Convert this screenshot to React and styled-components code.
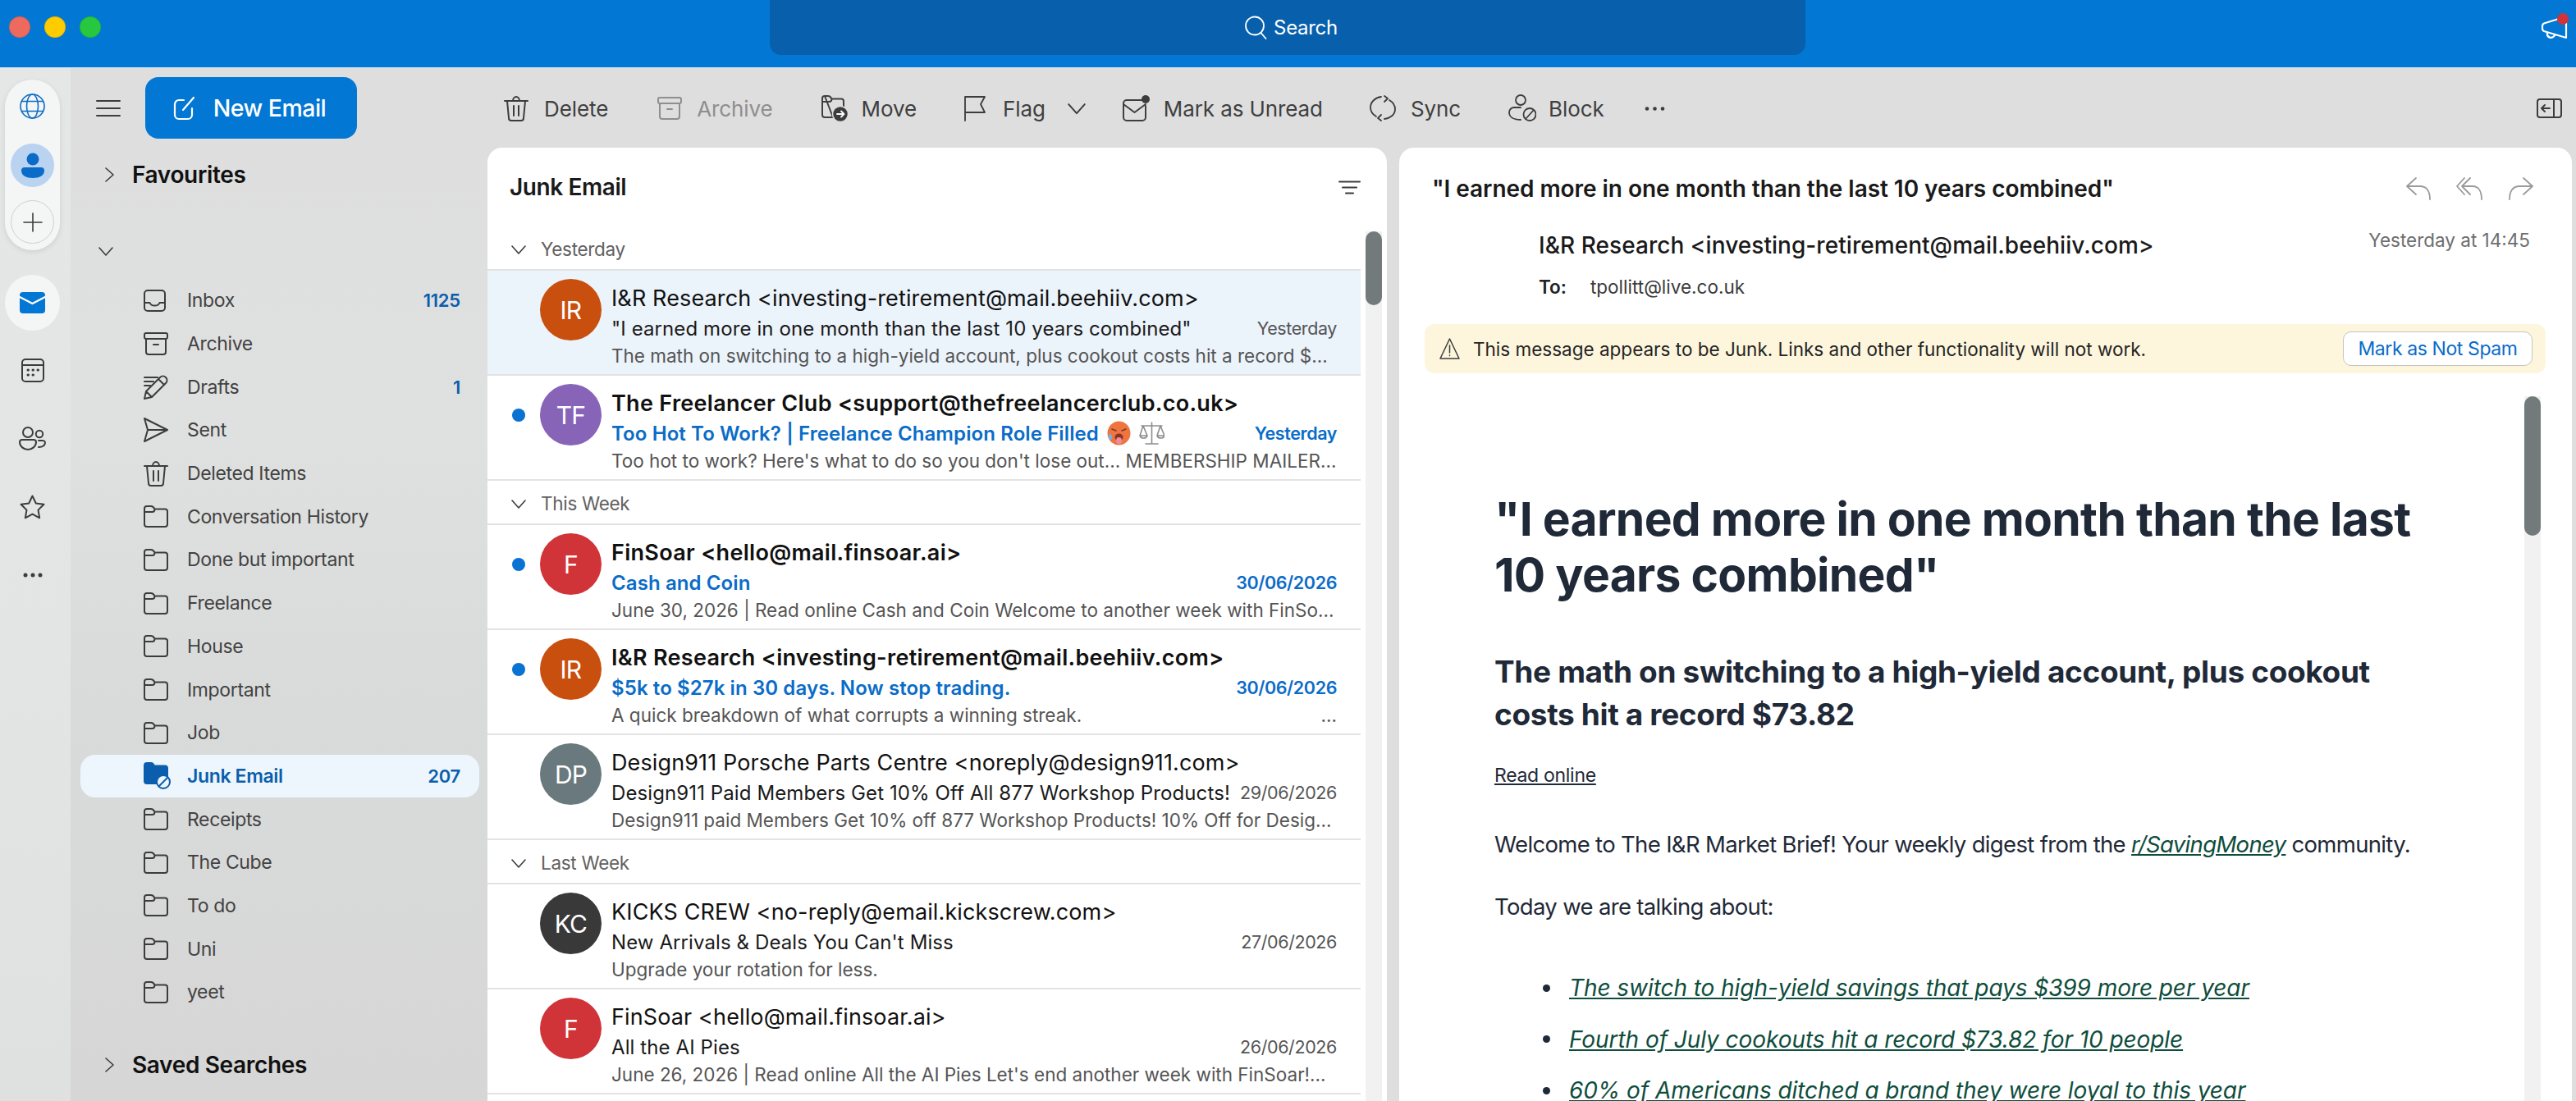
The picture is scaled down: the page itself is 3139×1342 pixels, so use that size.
import React from "react";
import styled, { createGlobalStyle } from "styled-components";

const Global = createGlobalStyle`
  html, body { margin: 0; padding: 0; height: 100%; overflow: hidden; background: #dedede; }
  body { font-family: Inter, "Liberation Sans", sans-serif; -webkit-font-smoothing: antialiased; }
  #root { height: 100%; }
  * { box-sizing: border-box; }
`;

const Page = styled.div`
  width: 3139px; height: 1342px; display: flex; flex-direction: column; overflow: hidden;
`;
const TitleBar = styled.header`
  height: 83px; flex: none; background: #0277d4; border-bottom: 1px solid #cfe4f5;
  display: grid; grid-template-columns: 938px 1262px 1fr; align-items: start;
`;
const Lights = styled.div`
  display: flex; gap: 17px; padding: 20px 0 0 11px;
`;
const Light = styled.span`
  width: 26px; height: 26px; border-radius: 50%; background: ${p => p.$c}; box-shadow: inset 0 0 0 1px rgba(0,0,0,.1);
`;
const SearchBox = styled.div`
  height: 67px; background: #0860ad; border-radius: 0 0 14px 14px; display: flex; align-items: center; justify-content: center;
  gap: 7px; color: #fff; font-size: 24px; letter-spacing: -0.3px; padding-left: 8px;
`;
const TitleRight = styled.div`
  display: flex; justify-content: flex-end; padding: 20px 8px 0 0;
`;
const Notifier = styled.div`
  position: relative; width: 34px; height: 28px;
`;
const RedDot = styled.span`
  position: absolute; top: -4px; right: 1px; width: 14px; height: 14px; border-radius: 50%; background: #d13438;
`;
const Body = styled.div`
  flex: 1; display: flex; min-height: 0;
`;
const Rail = styled.nav`
  width: 86px; flex: none; background: linear-gradient(180deg,#e5e6e6,#e3e5e4 60%,#dfe0e0);
  display: flex; flex-direction: column; align-items: center; padding: 14px 13px 0 6px;
`;
const AccountPill = styled.div`
  width: 67px; height: 208px; border-radius: 34px; background: #f4f5f5; box-shadow: 0 2px 6px rgba(0,0,0,.1);
  display: flex; flex-direction: column; align-items: center; padding-top: 17px; flex: none;
`;
const AvatarBubble = styled.div`
  width: 53px; height: 53px; margin-top: 30px; border-radius: 50%; background: #b9d3f1; display: flex; align-items: center; justify-content: center;
`;
const PlusBubble = styled.div`
  width: 53px; height: 53px; margin-top: 16px; border-radius: 50%; border: 1px solid #cfcfcf; display: flex; align-items: center; justify-content: center;
`;
const MailPill = styled.div`
  width: 67px; height: 68px; margin-top: 30px; border-radius: 34px; background: #f4f5f5; display: flex; align-items: center; justify-content: center; flex: none;
`;
const RailItem = styled.div`
  height: 83px; display: flex; align-items: center; justify-content: center; flex: none; margin-top: ${p => p.$top || 0}px;
`;
const FolderPane = styled.aside`
  width: 508px; flex: none; padding: 11px 10px 0 12px; display: flex; flex-direction: column;
  background: linear-gradient(180deg,#dedede 0%,#dfe0e0 35%,#d9dbda 62%,#d6d6d6 100%);
`;
const ComposeRow = styled.div`
  display: flex; align-items: center; height: 75px; padding-left: 19px; gap: 30px; flex: none;
`;
const NewEmail = styled.button`
  width: 258px; height: 75px; border: 0; border-radius: 16px; background: #0277d4; color: #fff;
  display: flex; align-items: center; justify-content: center; gap: 22px; padding: 0 4px 0 0;
  font: 500 28.5px Inter, sans-serif; letter-spacing: -0.5px;
`;
const SectionHead = styled.div`
  height: 52px; margin-top: ${p => p.$top}px; display: flex; align-items: center; gap: 19px; padding-left: 26px; flex: none;
  font-size: 28px; font-weight: 600; color: #111; letter-spacing: -0.35px;
`;
const CollapseRow = styled.div`
  height: 52px; margin-top: 41px; padding-left: 22px; display: flex; align-items: center; flex: none;
`;
const FolderList = styled.ul`
  list-style: none; margin: 8px 0 0; padding: 0; flex: none;
`;
const FolderRow = styled.li`
  height: 52.7px; display: flex; align-items: center; padding: 0 23px 0 77px; gap: 23px; border-radius: 18px;
  font-size: 23px; letter-spacing: -0.36px; color: ${p => (p.$active ? "#0a5ead" : "#424242")}; font-weight: ${p => (p.$active ? 600 : 400)};
  background: ${p => (p.$active ? "#eef6fd" : "transparent")};
`;
const FolderIcon = styled.span`
  width: 30px; flex: none; display: flex; align-items: center;
`;
const FolderName = styled.span`
  flex: 1;
`;
const Count = styled.span`
  color: #0a5ead; font-weight: 600; font-size: 22px; letter-spacing: -0.2px;
`;
const Main = styled.main`
  flex: 1; min-width: 0; display: flex; flex-direction: column; padding-right: 5px;
`;
const Toolbar = styled.div`
  height: 97px; flex: none; display: flex; align-items: center; padding: 1px 12px 0 20px; gap: 57px; background: #dedede;
`;
const ToolButton = styled.div`
  display: flex; align-items: center; gap: ${p => p.$inner || 18}px; font-size: 26px; letter-spacing: -0.1px;
  color: ${p => (p.$off ? "#8e8e8e" : "#3f3f3f")}; margin-left: ${p => p.$shift || 0}px;
`;
const FlagCaret = styled.span`
  margin-left: 6px; display: flex;
`;
const ToolEnd = styled.div`
  margin-left: auto; display: flex; align-items: center;
`;
const Panels = styled.div`
  flex: 1; min-height: 0; display: flex; gap: 15px;
`;
const ListPanel = styled.section`
  width: 1096px; flex: none; background: #fff; border-radius: 18px 18px 0 0; display: flex; flex-direction: column; overflow: hidden;
`;
const ListHead = styled.div`
  height: 96px; flex: none; display: flex; align-items: center; justify-content: space-between; padding: 0 32px 0 27px;
  font-size: 28px; font-weight: 600; color: #1a1a1a; letter-spacing: -0.42px;
`;
const ListBody = styled.div`
  flex: 1; min-height: 0; display: flex;
`;
const Rows = styled.div`
  width: 1064px; flex: none;
`;
const Track = styled.div`
  width: 20px; margin: ${p => p.$top}px 0 0 ${p => p.$left}px; flex: none; background: #f1f1f1;
`;
const Thumb = styled.div`
  width: 20px; height: ${p => p.$h}px; border-radius: 10px; background: #737a7b;
`;
const GroupHead = styled.div`
  height: 54px; display: flex; align-items: center; gap: 18px; padding: 3px 0 0 29px; border-bottom: 2px solid #e3e3e3;
  font-size: 22.5px; color: #616161; letter-spacing: -0.3px;
`;
const MailRow = styled.article`
  height: 128px; display: flex; padding-top: 10px; border-bottom: 2px solid #e3e3e3; background: ${p => (p.$sel ? "#ebf3fb" : "#fff")};
`;
const DotSlot = styled.div`
  width: 64px; flex: none; padding: 30px 0 0 30px;
`;
const UnreadDot = styled.span`
  display: block; width: 16px; height: 16px; border-radius: 50%; background: #0a72d1;
`;
const Avatar = styled.div`
  width: 75px; height: 75px; flex: none; border-radius: 50%; background: ${p => p.$c}; color: #fff; display: flex; align-items: center; justify-content: center;
  font-size: 30px; letter-spacing: -0.8px;
`;
const MailText = styled.div`
  flex: 1; min-width: 0; padding: 6px 29px 0 12px;
`;
const Sender = styled.div`
  height: 36px; line-height: 36px; font-size: 27px; color: #111; white-space: nowrap; font-weight: ${p => (p.$unread ? 600 : 400)}; letter-spacing: ${p => (p.$unread ? 0.3 : 0.12)}px;
`;
const SubjectLine = styled.div`
  height: 36px; display: flex; align-items: center; justify-content: space-between; gap: 8px; white-space: nowrap;
`;
const Subject = styled.div`
  display: flex; align-items: center; gap: 10px; font-size: 24px; letter-spacing: 0.1px; font-weight: ${p => (p.$unread ? 600 : 400)}; color: ${p => (p.$unread ? "#0a6cc8" : "#1a1a1a")};
`;
const MailDate = styled.div`
  font-size: 21.5px; letter-spacing: -0.4px; font-weight: ${p => (p.$unread ? 600 : 400)}; color: ${p => (p.$unread ? "#0a6cc8" : "#555")};
`;
const Preview = styled.div`
  height: 32px; line-height: 32px; font-size: 22.5px; color: #555; white-space: nowrap; letter-spacing: 0; display: flex; justify-content: space-between;
`;
const Reader = styled.section`
  flex: 1; min-width: 0; background: #fff; border-radius: 18px 18px 0 0; display: flex; flex-direction: column; overflow: hidden;
`;
const ReaderTitle = styled.div`
  height: 100px; flex: none; display: flex; align-items: center; justify-content: space-between; padding: 0 47px 0 40px;
  font-size: 28px; font-weight: 600; color: #1a1a1a; letter-spacing: -0.05px;
`;
const ReplyGroup = styled.div`
  display: flex; gap: 30px;
`;
const FromLine = styled.div`
  display: flex; justify-content: space-between; align-items: flex-start; padding: 0 51px 0 170px; flex: none; height: 42px;
`;
const FromName = styled.div`
  font-size: 28px; font-weight: 500; color: #1a1a1a; letter-spacing: 0.05px; line-height: 38px;
`;
const Sent = styled.div`
  font-size: 22.5px; color: #6e6e6e; letter-spacing: 0; line-height: 26px;
`;
const ToLine = styled.div`
  display: flex; gap: 29px; padding: 12px 0 0 170px; flex: none; height: 73px; font-size: 22.5px; color: #3b3b3b; letter-spacing: 0; line-height: 32px;
`;
const ToLabel = styled.strong`
  font-weight: 600; color: #222;
`;
const Banner = styled.div`
  height: 60px; margin: 0 32px 0 31px; flex: none; border-radius: 12px; background: #fdf6dd; display: flex; align-items: center; padding: 0 16px 0 18px; gap: 16px;
  font-size: 22.5px; color: #242424; letter-spacing: 0;
`;
const BannerText = styled.div`
  flex: 1;
`;
const NotSpam = styled.button`
  width: 231px; height: 42px; background: #fff; border: 1px solid #c4c4c4; border-radius: 10px; color: #0a6cc8; padding: 0;
  font: 400 23px Inter, sans-serif; letter-spacing: -0.4px;
`;
const ReaderBody = styled.div`
  flex: 1; min-height: 0; display: flex;
`;
const Article = styled.div`
  width: 1371px; flex: none; padding: 144px 0 0 116px; color: #1f2937;
`;
const H1 = styled.h1`
  margin: 0; font-size: 57px; line-height: 68px; font-weight: 700; width: 1140px; letter-spacing: -0.72px; color: #1f2937;
`;
const H2 = styled.h2`
  margin: 58px 0 0; font-size: 37px; line-height: 52px; font-weight: 700; width: 1110px; letter-spacing: -0.35px;
`;
const ReadOnline = styled.a`
  display: block; margin-top: 32px; font-size: 23px; line-height: 32px; color: #1f2937; text-decoration: underline; letter-spacing: -0.3px;
`;
const Para = styled.p`
  margin: ${p => p.$top}px 0 0; font-size: 27.5px; line-height: 40px; letter-spacing: -0.67px;
`;
const Link = styled.a`
  color: #0e4d3c; font-style: italic; text-decoration: underline;
`;
const Bullets = styled.ul`
  list-style: none; margin: 59px 0 0; padding: 0 0 0 59px; font-size: 28px; line-height: 40px; letter-spacing: -0.07px;
`;
const Bullet = styled.li`
  display: flex; align-items: center; gap: 23px; margin-bottom: 22.7px; white-space: nowrap;
`;
const BulletDot = styled.span`
  width: 9px; height: 9px; border-radius: 50%; background: #1f2937; flex: none;
`;

const Svg = styled.svg`
  display: block; flex: none; fill: none; stroke: ${p => p.$c || "#3f3f3f"}; stroke-width: ${p => p.$sw || 2}; stroke-linecap: round; stroke-linejoin: round;
`;
const I = ({ w = 30, h = 30, c, sw, vb, children }) => (
  <Svg width={w} height={h} viewBox={vb || `0 0 ${w} ${h}`} $c={c} $sw={sw}>{children}</Svg>
);

const Folder = ({ c }) => (
  <I c={c || "#3c3c3c"} h={27}><path d="M4 1h5c2.500 0 3.500 1.500 4.500 3.500H26a3 3 0 0 1 3 3V23a3 3 0 0 1-3 3H4a3 3 0 0 1-3-3V4a3 3 0 0 1 3-3zM1 8h9.500c2 0 3-1.500 3-3.500" /></I>
);
const Inbox = () => (
  <I h={27} w={28} c="#3c3c3c"><rect x="1" y="1" width="25" height="25" rx="4" /><path d="M1 16h6.500c1 2.600 3.300 3.600 6 3.600s5-1 6-3.600H26" /></I>
);
const ArchiveI = ({ c }) => (
  <I h={28} w={30} c={c || "#3c3c3c"}><rect x="1" y="1" width="28" height="7" rx="2" /><path d="M3 8v16a3 3 0 0 0 3 3h18a3 3 0 0 0 3-3V8M12 15h6" /></I>
);
const Drafts = () => (
  <I h={30} c="#3c3c3c"><path d="M1 29l2-9L20 3c2-2 5-2 7 0s2 5 0 7L10 27zM3 20l7 7M18 5l7 7M1 3h16M1 8h11M1 13h7" /></I>
);
const SentI = () => (
  <I h={30} c="#3c3c3c"><path d="M1 1l28 14L1 29l4-14zM5 15h24" /></I>
);
const Trash = ({ w = 30, h = 31 }) => (
  <I w={w} h={h} vb="0 0 30 31" c="#3c3c3c"><path d="M1 6h28M11 6c0-3 2-5 4-5s4 2 4 5M4 6l2 21c0 2 1 3 3 3h12c2 0 3-1 3-3l2-21M12 12v12M18 12v12" /></I>
);
const JunkFolder = () => (
  <Svg width="33" height="33" viewBox="0 0 33 33">
    <path d="M4 0h5c2.500 0 3.500 1.500 4.500 3.500H26a4 4 0 0 1 4 4V24a3 3 0 0 1-3 3H4a4 4 0 0 1-4-4V4a4 4 0 0 1 4-4z" fill="#0a5ead" stroke="none" />
    <circle cx="24" cy="24" r="8" fill="#eef6fd" stroke="#0a5ead" strokeWidth="2" />
    <path d="M19 29l10-10" stroke="#0a5ead" strokeWidth="2" />
  </Svg>
);
const Chev = ({ dir = "down", s = 18, c = "#3c3c3c" }) => (
  <I w={s} h={s} vb="0 0 18 18" c={c} sw={1.6}>
    {dir === "down" ? <path d="M1 5l8 9 8-9" /> : <path d="M5 1l9 8-9 8" />}
  </I>
);
const Hamburger = () => (
  <I w={30} h={22} c="#3c3c3c"><path d="M1 2h28M1 11h28M1 20h28" /></I>
);

const folders = [
  ["Inbox", <Inbox />, "1125"], ["Archive", <ArchiveI />], ["Drafts", <Drafts />, "1"], ["Sent", <SentI />], ["Deleted Items", <Trash />],
  ["Conversation History"], ["Done but important"], ["Freelance"], ["House"], ["Important"], ["Job"],
  ["Junk Email", <JunkFolder />, "207", true], ["Receipts"], ["The Cube"], ["To do"], ["Uni"], ["yeet"],
];

const Hot = () => (
  <Svg width="29" height="30" viewBox="0 0 29 30">
    <ellipse cx="14.500" cy="15" rx="14" ry="14.500" fill="#ee7440" stroke="none" />
    <path d="M6 10l5 2M23 10l-5 2" stroke="#7a3a20" strokeWidth="1.600" />
    <ellipse cx="14.500" cy="20" rx="5" ry="4.500" fill="#8a3420" stroke="none" />
    <ellipse cx="14.500" cy="24" rx="3.500" ry="4" fill="#f08aa0" stroke="none" />
    <path d="M4 15c-2.500 3-3 7-.5 8s3.500-4 .5-8z" fill="#6cb6ee" stroke="none" />
  </Svg>
);
const Scales = () => (
  <I w={31} h={31} c="#8d8d8d" sw={1.6}>
    <path d="M15.500 2v26M3 6h25M8 28h15M5 6L1 18h9zM26 6l-4 12h9zM1 18c1 4 8 4 9 0M22 18c1 4 8 4 9 0" />
  </I>
);

const mails = [
  { g: "Yesterday" },
  { c: "#c94f0f", a: "IR", s: "I&R Research <investing-retirement@mail.beehiiv.com>", t: "\"I earned more in one month than the last 10 years combined\"", d: "Yesterday", p: "The math on switching to a high-yield account, plus cookout costs hit a record $...", sel: true },
  { c: "#8764b8", a: "TF", s: "The Freelancer Club <support@thefreelancerclub.co.uk>", t: "Too Hot To Work? | Freelance Champion Role Filled", d: "Yesterday", p: "Too hot to work? Here's what to do so you don't lose out... MEMBERSHIP MAILER...", u: true, e: true },
  { g: "This Week" },
  { c: "#d13438", a: "F", s: "FinSoar <hello@mail.finsoar.ai>", t: "Cash and Coin", d: "30/06/2026", p: "June 30, 2026 | Read online Cash and Coin Welcome to another week with FinSo...", u: true },
  { c: "#c94f0f", a: "IR", s: "I&R Research <investing-retirement@mail.beehiiv.com>", t: "$5k to $27k in 30 days. Now stop trading.", d: "30/06/2026", p: "A quick breakdown of what corrupts a winning streak.", tail: "...", u: true },
  { c: "#69797e", a: "DP", s: "Design911 Porsche Parts Centre <noreply@design911.com>", t: "Design911 Paid Members Get 10% Off All 877 Workshop Products!", d: "29/06/2026", p: "Design911 paid Members Get 10% off 877 Workshop Products! 10% Off for Desig..." },
  { g: "Last Week" },
  { c: "#393939", a: "KC", s: "KICKS CREW <no-reply@email.kickscrew.com>", t: "New Arrivals & Deals You Can't Miss", d: "27/06/2026", p: "Upgrade your rotation for less." },
  { c: "#d13438", a: "F", s: "FinSoar <hello@mail.finsoar.ai>", t: "All the AI Pies", d: "26/06/2026", p: "June 26, 2026 | Read online All the AI Pies Let's end another week with FinSoar!..." },
];

export default function App() {
  return (
    <Page>
      <Global />
      <TitleBar>
        <Lights>
          <Light $c="#ee6a5f" /><Light $c="#ffcc00" /><Light $c="#27c840" />
        </Lights>
        <SearchBox>
          <I w={29} h={29} c="#fff" sw={1.8}><circle cx="13" cy="12.500" r="11" /><path d="M20.500 21l6 7" /></I>
          Search
        </SearchBox>
        <TitleRight>
          <Notifier>
            <I w={34} h={28} c="#fff" sw={2.2}><path d="M30 3v23L3 18c-1-.5-2-1-2-3V12c0-2 1-3 2-3.500L24 2M7 20c-1 6 6 8 9 3" /></I>
            <RedDot />
          </Notifier>
        </TitleRight>
      </TitleBar>
      <Body>
        <Rail>
          <AccountPill>
            <I w={31} h={31} c="#0a6cc8" sw={1.6}><circle cx="15.500" cy="15.500" r="14.500" /><ellipse cx="15.500" cy="15.500" rx="7" ry="14.500" /><path d="M2.500 9.500h26M2.500 21.500h26" /></I>
            <AvatarBubble>
              <Svg width="28" height="32" viewBox="0 0 28 32"><circle cx="14" cy="8" r="7.500" fill="#0a6cc8" stroke="none" /><path d="M4 18h20a4 4 0 0 1 4 4c0 6-6 9-14 9S0 28 0 22a4 4 0 0 1 4-4z" fill="#0a6cc8" stroke="none" /></Svg>
            </AvatarBubble>
            <PlusBubble>
              <I w={24} h={24} c="#3c3c3c" sw={1.6}><path d="M12 1v22M1 12h22" /></I>
            </PlusBubble>
          </AccountPill>
          <MailPill>
            <Svg width="31" height="26" viewBox="0 0 31 26"><rect width="31" height="26" rx="4" fill="#0277d4" stroke="none" /><path d="M0 6l15.500 8L31 6" stroke="#fff" strokeWidth="2.400" /></Svg>
          </MailPill>
          <RailItem $top={7}>
            <I w={28} h={29} c="#3c3c3c"><rect x="1" y="1" width="26" height="27" rx="4" /><path d="M1 8h26" /><path d="M8 14h.5M14 14h.5M20 14h.5M8 20h.5M14 20h.5" strokeWidth="3" /></I>
          </RailItem>
          <RailItem>
            <I w={33} h={29} c="#3c3c3c"><circle cx="11" cy="7" r="6" /><circle cx="25" cy="9" r="4.200" /><path d="M4 16h14a3 3 0 0 1 3 3c0 5-5 9-10 9S1 24 1 19a3 3 0 0 1 3-3zM24 17h5a3 3 0 0 1 3 2c0 4-3 6-8 6" /></I>
          </RailItem>
          <RailItem>
            <I w={31} h={30} c="#3c3c3c"><path d="M15.500 1.500l4.300 9 9.700 1.300-7 6.800 1.700 9.700-8.700-4.700-8.700 4.700 1.700-9.700-7-6.800 9.700-1.300z" /></I>
          </RailItem>
          <RailItem>
            <Svg width="24" height="6" viewBox="0 0 24 6"><circle cx="3" cy="3" r="2.500" fill="#3c3c3c" stroke="none" /><circle cx="12" cy="3" r="2.500" fill="#3c3c3c" stroke="none" /><circle cx="21" cy="3" r="2.500" fill="#3c3c3c" stroke="none" /></Svg>
          </RailItem>
        </Rail>
        <FolderPane>
          <ComposeRow>
            <Hamburger />
            <NewEmail>
              <I w={27} h={30} c="#fff" sw={2.2}><path d="M13 5H7a5 5 0 0 0-5 5v13a5 5 0 0 0 5 5h11a5 5 0 0 0 5-5v-8M12 17L25 2" /></I>
              New Email
            </NewEmail>
          </ComposeRow>
          <SectionHead $top={18}><Chev dir="right" />Favourites</SectionHead>
          <CollapseRow><Chev /></CollapseRow>
          <FolderList>
            {folders.map(([name, icon, count, active]) => (
              <FolderRow key={name} $active={active}>
                <FolderIcon>{icon || <Folder />}</FolderIcon>
                <FolderName>{name}</FolderName>
                {count && <Count>{count}</Count>}
              </FolderRow>
            ))}
          </FolderList>
          <SectionHead $top={36}><Chev dir="right" />Saved Searches</SectionHead>
        </FolderPane>
        <Main>
          <Toolbar>
            <ToolButton $inner={19}><Trash />Delete</ToolButton>
            <ToolButton $off $shift={3}><ArchiveI c="#8e8e8e" />Archive</ToolButton>
            <ToolButton $inner={16} $shift={2}>
              <Svg width="33" height="33" viewBox="0 0 33 33"><path d="M4 1h4c2.500 0 3.500 1.500 4.500 3.500H24a3 3 0 0 1 3 3V15M14 27H4a3 3 0 0 1-3-3V4a3 3 0 0 1 3-3zM1 8h8c2 0 3.500-1.500 3.500-3.500" /><circle cx="23" cy="23" r="9.500" fill="#3c3c3c" stroke="#dedede" strokeWidth="1.500" /><path d="M19 23h8M24 19.500l3.500 3.500-3.500 3.500" stroke="#fff" strokeWidth="1.800" /></Svg>
              Move
            </ToolButton>
            <ToolButton $inner={21} $shift={0}>
              <I w={27} h={31} c="#3c3c3c" sw={1.800}><path d="M2 30V1h24l-5 9 5 10H2" /></I>
              Flag
              <FlagCaret><Chev s={22} /></FlagCaret>
            </ToolButton>
            <ToolButton $inner={16} $shift={-12}>
              <Svg width="34" height="32" viewBox="0 0 34 32"><path d="M24 6H5a4 4 0 0 0-4 4v17a4 4 0 0 0 4 4h19a4 4 0 0 0 4-4V13M1 11l13.500 10L28 11" /><circle cx="28" cy="5" r="5" fill="#3c3c3c" stroke="none" /></Svg>
              Mark as Unread
            </ToolButton>
            <ToolButton $inner={18} $shift={0}>
              <I w={32} h={34} c="#3c3c3c" sw={1.800}><path d="M8 27C3 24 1 20 1 16 1 9 7 4 14 3M18 2l4 3-4 4M24 7c5 3 7 7 7 11 0 7-6 11-13 12M14 32l-4-3 4-4" /></I>
              Sync
            </ToolButton>
            <ToolButton $inner={15} $shift={1}>
              <I w={34} h={34} c="#3c3c3c" sw={1.800}><circle cx="15" cy="7" r="6" /><path d="M15 16H7a6 6 0 0 0-6 6c0 6 6 9 14 9M26 17a7.500 7.500 0 1 1 0 15 7.500 7.500 0 0 1 0-15zM21 30l10-11" /></I>
              Block
            </ToolButton>
            <ToolButton $shift={-8}>
              <Svg width="25" height="5" viewBox="0 0 25 5"><circle cx="3" cy="2.500" r="2.300" fill="#3c3c3c" stroke="none" /><circle cx="12.500" cy="2.500" r="2.300" fill="#3c3c3c" stroke="none" /><circle cx="22" cy="2.500" r="2.300" fill="#3c3c3c" stroke="none" /></Svg>
            </ToolButton>
            <ToolEnd>
              <I w={31} h={24} c="#3c3c3c" sw={2}><rect x="1" y="1" width="29" height="22" rx="3" /><path d="M21 1v22M16 12H6M10 8l-4 4 4 4" /></I>
            </ToolEnd>
          </Toolbar>
          <Panels>
            <ListPanel>
              <ListHead>
                Junk Email
                <I w={27} h={17} c="#3c3c3c" sw={2}><path d="M1 1.500h25M5 8.500h17M9 15.500h9" /></I>
              </ListHead>
              <ListBody>
                <Rows>
                  {mails.map((m, i) => m.g ? (
                    <GroupHead key={i}><Chev />{m.g}</GroupHead>
                  ) : (
                    <MailRow key={i} $sel={m.sel}>
                      <DotSlot>{m.u && <UnreadDot />}</DotSlot>
                      <Avatar $c={m.c}>{m.a}</Avatar>
                      <MailText>
                        <Sender $unread={m.u}>{m.s}</Sender>
                        <SubjectLine>
                          <Subject $unread={m.u}>{m.t}{m.e && <><Hot /><Scales /></>}</Subject>
                          <MailDate $unread={m.u}>{m.d}</MailDate>
                        </SubjectLine>
                        <Preview><span>{m.p}</span>{m.tail && <span>{m.tail}</span>}</Preview>
                      </MailText>
                    </MailRow>
                  ))}
                </Rows>
                <Track $top={6} $left={6}><Thumb $h={90} /></Track>
              </ListBody>
            </ListPanel>
            <Reader>
              <ReaderTitle>
                {"\"I earned more in one month than the last 10 years combined\""}
                <ReplyGroup>
                  <I w={31} h={28} c="#9a9a9a" sw={1.800}><path d="M12 1L1 11l11 10M1 11h16c8 0 12 6 12 16" /></I>
                  <I w={33} h={28} c="#9a9a9a" sw={1.800}><path d="M10 1L1 11l9 10M17 1L7 11l10 10M7 11h13c7 0 11 6 11 16" /></I>
                  <I w={31} h={28} c="#9a9a9a" sw={1.800}><path d="M19 1l11 10-11 10M30 11H14C6 11 2 17 2 27" /></I>
                </ReplyGroup>
              </ReaderTitle>
              <FromLine>
                <FromName>{"I&R Research <investing-retirement@mail.beehiiv.com>"}</FromName>
                <Sent>Yesterday at 14:45</Sent>
              </FromLine>
              <ToLine><ToLabel>To:</ToLabel>tpollitt@live.co.uk</ToLine>
              <Banner>
                <I w={25} h={26} c="#3c3c3c" sw={1.500}><path d="M12.500 1L1 25h23zM12.500 9v9M12.500 21v.5" /></I>
                <BannerText>This message appears to be Junk. Links and other functionality will not work.</BannerText>
                <NotSpam>Mark as Not Spam</NotSpam>
              </Banner>
              <ReaderBody>
                <Article>
                  <H1>{"\"I earned more in one month than the last 10 years combined\""}</H1>
                  <H2>The math on switching to a high-yield account, plus cookout costs hit a record $73.82</H2>
                  <ReadOnline>Read online</ReadOnline>
                  <Para $top={48}>Welcome to The I&amp;R Market Brief! Your weekly digest from the <Link>r/SavingMoney</Link> community.</Para>
                  <Para $top={36}>Today we are talking about:</Para>
                  <Bullets>
                    <Bullet><BulletDot /><Link>The switch to high-yield savings that pays $399 more per year</Link></Bullet>
                    <Bullet><BulletDot /><Link>Fourth of July cookouts hit a record $73.82 for 10 people</Link></Bullet>
                    <Bullet><BulletDot /><Link>60% of Americans ditched a brand they were loyal to this year</Link></Bullet>
                  </Bullets>
                </Article>
                <Track $top={28} $left={0}><Thumb $h={170} /></Track>
              </ReaderBody>
            </Reader>
          </Panels>
        </Main>
      </Body>
    </Page>
  );
}
